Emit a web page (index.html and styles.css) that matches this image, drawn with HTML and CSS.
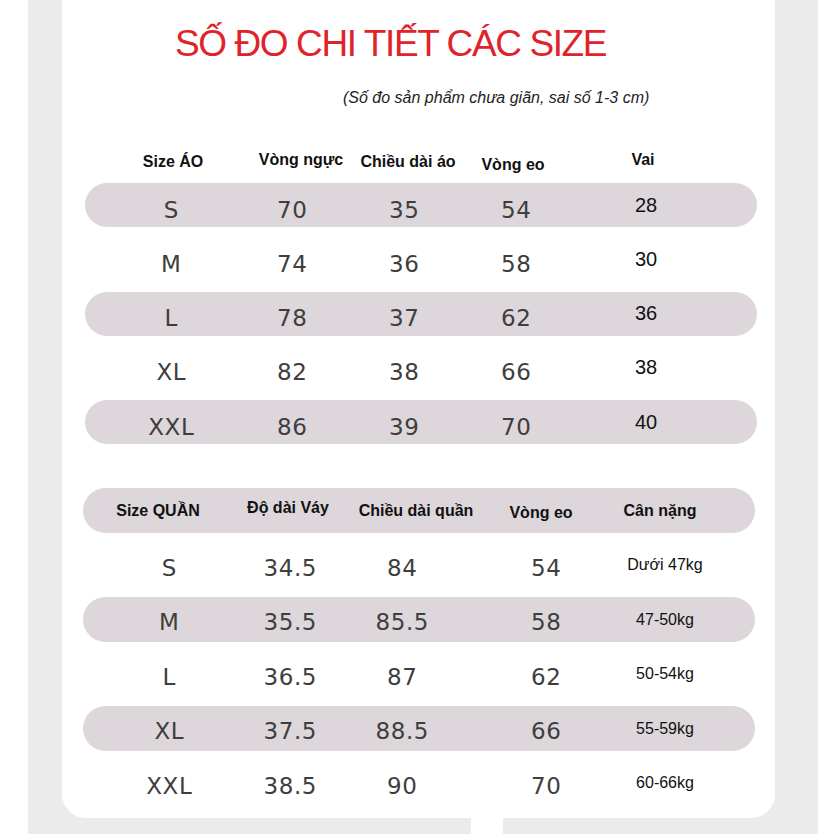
FILE: index.html
```html
<!DOCTYPE html>
<html lang="vi">
<head>
<meta charset="utf-8">
<title>Số đo chi tiết các size</title>
<link rel="stylesheet" href="styles.css">
</head>
<body>
<div class="frame">
  <div class="card">
    <h1 class="title">SỐ ĐO CHI TIẾT CÁC SIZE</h1>
    <p class="note">(Số đo sản phẩm chưa giãn, sai số 1-3 cm)</p>

    <div class="table t1">
      <div class="head">
        <div class="cell">Size ÁO</div>
        <div class="cell hi">Vòng ngực</div>
        <div class="cell">Chiều dài áo</div>
        <div class="cell lo">Vòng eo</div>
        <div class="cell hi">Vai</div>
      </div>
      <div class="row band">
        <div class="cell num">S</div><div class="cell num">70</div><div class="cell num">35</div><div class="cell num">54</div><div class="cell vai">28</div>
      </div>
      <div class="row">
        <div class="cell num">M</div><div class="cell num">74</div><div class="cell num">36</div><div class="cell num">58</div><div class="cell vai">30</div>
      </div>
      <div class="row band">
        <div class="cell num">L</div><div class="cell num">78</div><div class="cell num">37</div><div class="cell num">62</div><div class="cell vai">36</div>
      </div>
      <div class="row">
        <div class="cell num">XL</div><div class="cell num">82</div><div class="cell num">38</div><div class="cell num">66</div><div class="cell vai">38</div>
      </div>
      <div class="row band">
        <div class="cell num">XXL</div><div class="cell num">86</div><div class="cell num">39</div><div class="cell num">70</div><div class="cell vai">40</div>
      </div>
    </div>

    <div class="table t2">
      <div class="head band">
        <div class="cell">Size QUẦN</div>
        <div class="cell hi">Độ dài Váy</div>
        <div class="cell">Chiều dài quần</div>
        <div class="cell lo">Vòng eo</div>
        <div class="cell">Cân nặng</div>
      </div>
      <div class="row">
        <div class="cell num">S</div><div class="cell num">34.5</div><div class="cell num">84</div><div class="cell num">54</div><div class="cell kg">Dưới 47kg</div>
      </div>
      <div class="row band">
        <div class="cell num">M</div><div class="cell num">35.5</div><div class="cell num">85.5</div><div class="cell num">58</div><div class="cell kg">47-50kg</div>
      </div>
      <div class="row">
        <div class="cell num">L</div><div class="cell num">36.5</div><div class="cell num">87</div><div class="cell num">62</div><div class="cell kg">50-54kg</div>
      </div>
      <div class="row band">
        <div class="cell num">XL</div><div class="cell num">37.5</div><div class="cell num">88.5</div><div class="cell num">66</div><div class="cell kg">55-59kg</div>
      </div>
      <div class="row">
        <div class="cell num">XXL</div><div class="cell num">38.5</div><div class="cell num">90</div><div class="cell num">70</div><div class="cell kg">60-66kg</div>
      </div>
    </div>
  </div>
  <div class="foot"><div class="gap"></div></div>
</div>
</body>
</html>
```

FILE: styles.css
```css
html, body {
  margin: 0;
  padding: 0;
  background: #ffffff;
}

.frame {
  box-sizing: border-box;
  margin-left: 28px;
  width: 790px;
  padding: 0 43px 0 34px;
  background: #ebebeb;
}

.card {
  background: #ffffff;
  border-radius: 0 0 24px 24px;
  padding: 25px 0 12px;
}

.title {
  margin: 0 0 0 113px;
  font-family: "Liberation Sans", Arial, sans-serif;
  font-size: 37px;
  font-weight: 400;
  line-height: 1;
  letter-spacing: -1.4px;
  color: #e0232a;
  white-space: nowrap;
}

.note {
  margin: 27.5px 0 0 281px;
  font-family: "Liberation Sans", Arial, sans-serif;
  font-style: italic;
  font-size: 16px;
  line-height: 1;
  color: #1e1e1e;
  white-space: nowrap;
}

.band {
  background: #ddd6da;
  border-radius: 23px;
}

.head, .row {
  display: grid;
}

.cell {
  display: flex;
  align-items: center;
  justify-content: center;
  white-space: nowrap;
  box-sizing: border-box;
}

.head .cell {
  font-family: "Liberation Sans", Arial, sans-serif;
  font-weight: 700;
  font-size: 16px;
  line-height: 1;
  color: #111111;
}

.head .hi { padding-bottom: 5px; }
.head .lo { padding-top: 5px; }

.num {
  font-family: "DejaVu Sans", "Open Sans", sans-serif;
  font-size: 23px;
  font-weight: 400;
  line-height: 30px;
  letter-spacing: 0.6px;
  padding-left: 0.6px;
  padding-top: 9px;
  color: #3e3e3e;
}

.vai {
  font-family: "Liberation Sans", Arial, sans-serif;
  font-size: 20px;
  color: #111111;
}

.kg {
  font-family: "Liberation Sans", Arial, sans-serif;
  font-size: 16px;
  color: #111111;
}

/* table 1 */
.t1 {
  margin: 45.5px 18px 0 23px;
}
.t1 .head {
  height: 22px;
  margin-bottom: 10px;
  grid-template-columns: 176px 80px 134px 76px 184px;
}
.t1 .row {
  height: 44px;
  grid-template-columns: 172px 70px 154px 70px 190px;
}
.t1 .row + .row {
  margin-top: 10.25px;
}

/* table 2 */
.t2 {
  margin: 44px 20px 0 21px;
}
.t2 .head {
  height: 45px;
  grid-template-columns: 150px 110px 146px 104px 134px;
}
.t2 .row {
  height: 45px;
  margin-top: 9.5px;
  grid-template-columns: 172px 70px 154px 134px 104px;
}
.t2 .num {
  padding-top: 5px;
}

.foot {
  display: flex;
  height: 16px;
}
.foot .gap {
  margin-left: 409px;
  width: 32px;
  background: #ffffff;
}
```
